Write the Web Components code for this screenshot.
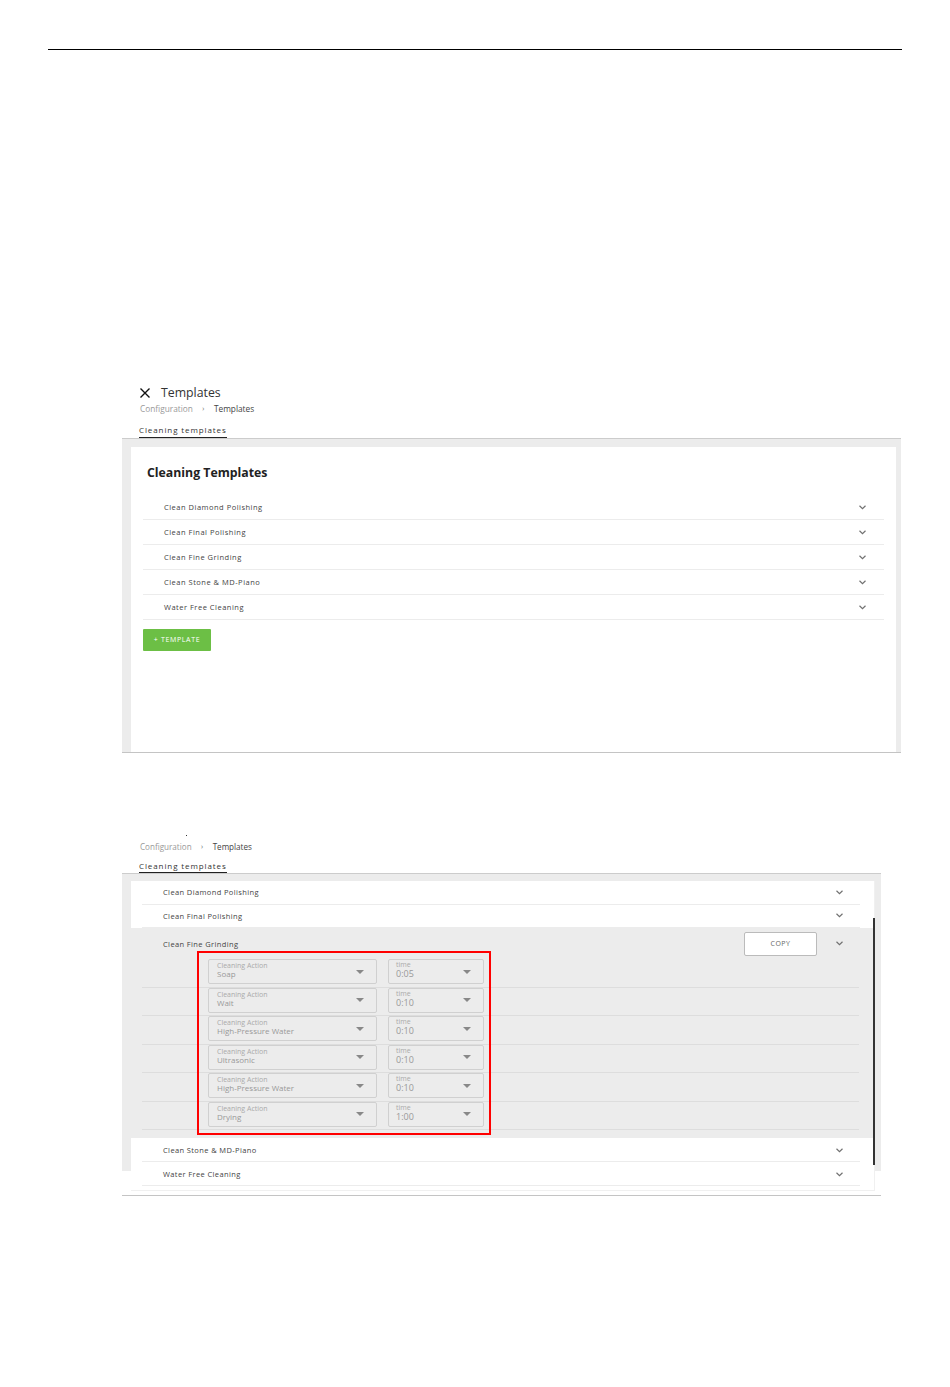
<!DOCTYPE html>
<html>
<head>
<meta charset="utf-8">
<title>Templates</title>
<style>
	html, body { margin: 0; background: #fff; }
	body { font-family: 'Open Sans', sans-serif; color: #333; }
</style>
</head>
<body>
<doc-page>
	<tpl-figure variant="list" title-text="Templates">
		<tpl-row name="Clean Diamond Polishing"></tpl-row>
		<tpl-row name="Clean Final Polishing"></tpl-row>
		<tpl-row name="Clean Fine Grinding"></tpl-row>
		<tpl-row name="Clean Stone &amp; MD-Piano"></tpl-row>
		<tpl-row name="Water Free Cleaning"></tpl-row>
	</tpl-figure>
	<tpl-figure variant="detail">
		<tpl-row name="Clean Diamond Polishing"></tpl-row>
		<tpl-row name="Clean Final Polishing"></tpl-row>
		<tpl-open name="Clean Fine Grinding">
			<tpl-step action="Soap" time="0:05"></tpl-step>
			<tpl-step action="Wait" time="0:10"></tpl-step>
			<tpl-step action="High-Pressure Water" time="0:10"></tpl-step>
			<tpl-step action="Ultrasonic" time="0:10"></tpl-step>
			<tpl-step action="High-Pressure Water" time="0:10"></tpl-step>
			<tpl-step action="Drying" time="1:00"></tpl-step>
		</tpl-open>
		<tpl-row tall name="Clean Stone &amp; MD-Piano"></tpl-row>
		<tpl-row tall name="Water Free Cleaning"></tpl-row>
	</tpl-figure>
</doc-page>
<script>
	const chevron = /* html */ `<svg width="7" height="5" viewBox="0 0 7 5" fill="none" stroke="#707070" stroke-width="1.2"><path d="M.5.8 3.5 3.6 6.5.8"/></svg>`

	customElements.define('doc-page', class extends HTMLElement {
		constructor() {
			super()
			this.attachShadow({ mode: 'open' }).innerHTML = /* html */ `
				<style>
					:host { display: block; padding: 49px 48px 0; height: 1387px; box-sizing: border-box; }
					hr { margin: 0; border: 0; height: 1px; background: #000; }
				</style>
				<hr>
				<slot></slot>
			`
		}
	})

	customElements.define('tpl-figure', class extends HTMLElement {
		constructor() {
			super()
			const detail = this.getAttribute('variant') === 'detail'
			const title = this.getAttribute('title-text')
			this.attachShadow({ mode: 'open' }).innerHTML = /* html */ `
				<style>
					:host { display: block; position: relative; margin-left: 74px; }
					:host([variant=list]) { width: 779px; margin-top: 333px; }
					:host([variant=detail]) { width: 759px; margin-top: 79px; }
					.head { display: flex; flex-direction: column; padding-left: 18px; }
					.title { display: flex; align-items: center; gap: 11px; height: 19px; font-size: 12.3px; color: #333; }
					.title svg { display: block; }
					.crumbs { display: flex; align-items: center; height: 14px; margin-top: -1px; font-size: 8.3px; color: #999; }
					:host([variant=detail]) .crumbs { padding-top: 7px; margin-top: 0; font-size: 8.1px; }
					.crumbs b { font-weight: 400; color: #444; }
					.crumbs i { width: 21px; text-align: center; font-style: normal; font-size: 7px; color: #666; }
					.tab { align-self: flex-start; margin: 9px 0 0 -1px; height: 14px; line-height: 11px; box-sizing: border-box; font-size: 8px; letter-spacing: .9px; color: #333; border-bottom: 1px solid #222; }
					:host([variant=detail]) .tab { margin-top: 7px; height: 13px; line-height: 12px; }
					.stage { border-top: 1px solid #ccc; background: linear-gradient(#ececec, #ececec) no-repeat top / 100% 297px; }
					:host([variant=list]) .stage { padding: 8px 5px 0 9px; background: #ececec; border-bottom: 1px solid #c4c4c4; height: 305px; }
					:host([variant=detail]) .stage { padding: 7px 6px 0 9px; height: 314px; border-bottom: 1px solid #c4c4c4; }
					.card { background: #fff; height: 100%; box-sizing: border-box; }
					:host([variant=list]) .card { padding: 0 12px; }
					:host([variant=detail]) .card { height: 310px; border: solid #f0f0f0; border-width: 0 1px 1px 0; }
					h2 { margin: 0; height: 48px; padding: 17px 0 0 4px; box-sizing: border-box; font-size: 12.3px; line-height: 18px; font-weight: 700; color: #222; }
					button { display: block; width: 68px; height: 22px; margin-top: 9px; padding: 0 0 1px; border: 0; border-radius: 1px; background: #6cbf45; color: #fff; font: 400 7px 'Open Sans', sans-serif; letter-spacing: .65px; }
					.bar { position: absolute; left: 751px; top: 86px; width: 2px; height: 247px; background: #333; }
					.mark { position: absolute; left: 75px; top: 119px; width: 294px; height: 184px; box-sizing: border-box; border: 2px solid #f00; }
					.speck { position: absolute; left: 64px; top: 3px; width: 1px; height: 1px; background: #333; }
				</style>
				${detail ? '<div class="speck"></div>' : ''}
				<div class="head">
					${title ? `<div class="title"><svg width="10" height="10" viewBox="0 0 10 10" stroke="#111" stroke-width="1.4"><path d="M.5.5l9 9M9.5.5l-9 9"/></svg>${title}</div>` : ''}
					<div class="crumbs">Configuration<i>›</i><b>Templates</b></div>
					<div class="tab">Cleaning templates</div>
				</div>
				<div class="stage">
					<div class="card">
						${detail ? '' : '<h2>Cleaning Templates</h2>'}
						<slot></slot>
						${detail ? '' : '<button>+ TEMPLATE</button>'}
					</div>
				</div>
				${detail ? '<div class="bar"></div><div class="mark"></div>' : ''}
			`
		}
	})

	customElements.define('tpl-row', class extends HTMLElement {
		constructor() {
			super()
			this.attachShadow({ mode: 'open' }).innerHTML = /* html */ `
				<style>
					:host { display: flex; align-items: center; justify-content: space-between; height: 25px; box-sizing: border-box; padding: 0 18px 0 21px; border-bottom: 1px solid #ececec; font-size: 7.5px; letter-spacing: .5px; color: #444; }
					:host-context(tpl-figure[variant=detail]) { height: 23.5px; margin: 0 14px 0 11px; padding: 0 17px 0 21px; letter-spacing: .38px; }
					:host([tall]) { height: 24px !important; padding-top: 1px !important; }
					svg { display: block; }
				</style>
				<span>${this.getAttribute('name').replace('&', '&amp;')}</span>
				${chevron}
			`
		}
	})

	customElements.define('tpl-open', class extends HTMLElement {
		constructor() {
			super()
			this.attachShadow({ mode: 'open' }).innerHTML = /* html */ `
				<style>
					:host { display: block; height: 210px; background: #ececec; }
					.top { display: flex; align-items: center; height: 31px; padding: 0 31px 0 32px; font-size: 7.5px; letter-spacing: .38px; color: #444; }
					.top span { flex: 1; padding-top: 1px; }
					.copy { width: 73px; height: 24px; margin-right: 19px; box-sizing: border-box; border: 1px solid #bbb; border-radius: 2px; background: #fff; color: #666; font-size: 7px; letter-spacing: .5px; display: flex; align-items: center; justify-content: center; }
					svg { display: block; }
				</style>
				<div class="top">
					<span>${this.getAttribute('name')}</span>
					<div class="copy">COPY</div>
					${chevron}
				</div>
				<slot></slot>
			`
		}
	})

	customElements.define('tpl-field', class extends HTMLElement {
		constructor() {
			super()
			this.attachShadow({ mode: 'open' }).innerHTML = /* html */ `
				<style>
					:host { display: flex; align-items: center; box-sizing: border-box; height: 25px; padding: 0 12px 0 var(--pad, 8px); border: 1px solid #d0d0d0; border-radius: 2px; color: #999; }
					div { flex: 1; display: flex; flex-direction: column; padding-bottom: 3px; }
					small { font-size: 7px; line-height: 8px; color: #aaa; }
					span { font-size: var(--value-size, 8px); line-height: var(--value-line, 8px); }
					i { width: 0; height: 0; border: solid transparent; border-width: 4px 4.5px 0; border-top-color: #888; }
				</style>
				<div><small>${this.getAttribute('label')}</small><span>${this.getAttribute('value')}</span></div>
				<i></i>
			`
		}
	})

	customElements.define('tpl-step', class extends HTMLElement {
		constructor() {
			super()
			this.attachShadow({ mode: 'open' }).innerHTML = /* html */ `
				<style>
					:host { display: flex; gap: 11px; height: 28.5px; box-sizing: border-box; margin: 0 15px 0 11px; padding: 0 0 0 66px; border-bottom: 1px solid #ddd; }
					.action { width: 169px; }
					.time { width: 96px; --value-size: 9px; --value-line: 10px; --pad: 7px; }
				</style>
				<tpl-field class="action" label="Cleaning Action" value="${this.getAttribute('action')}"></tpl-field>
				<tpl-field class="time" label="time" value="${this.getAttribute('time')}"></tpl-field>
			`
		}
	})
</script>
</body>
</html>
